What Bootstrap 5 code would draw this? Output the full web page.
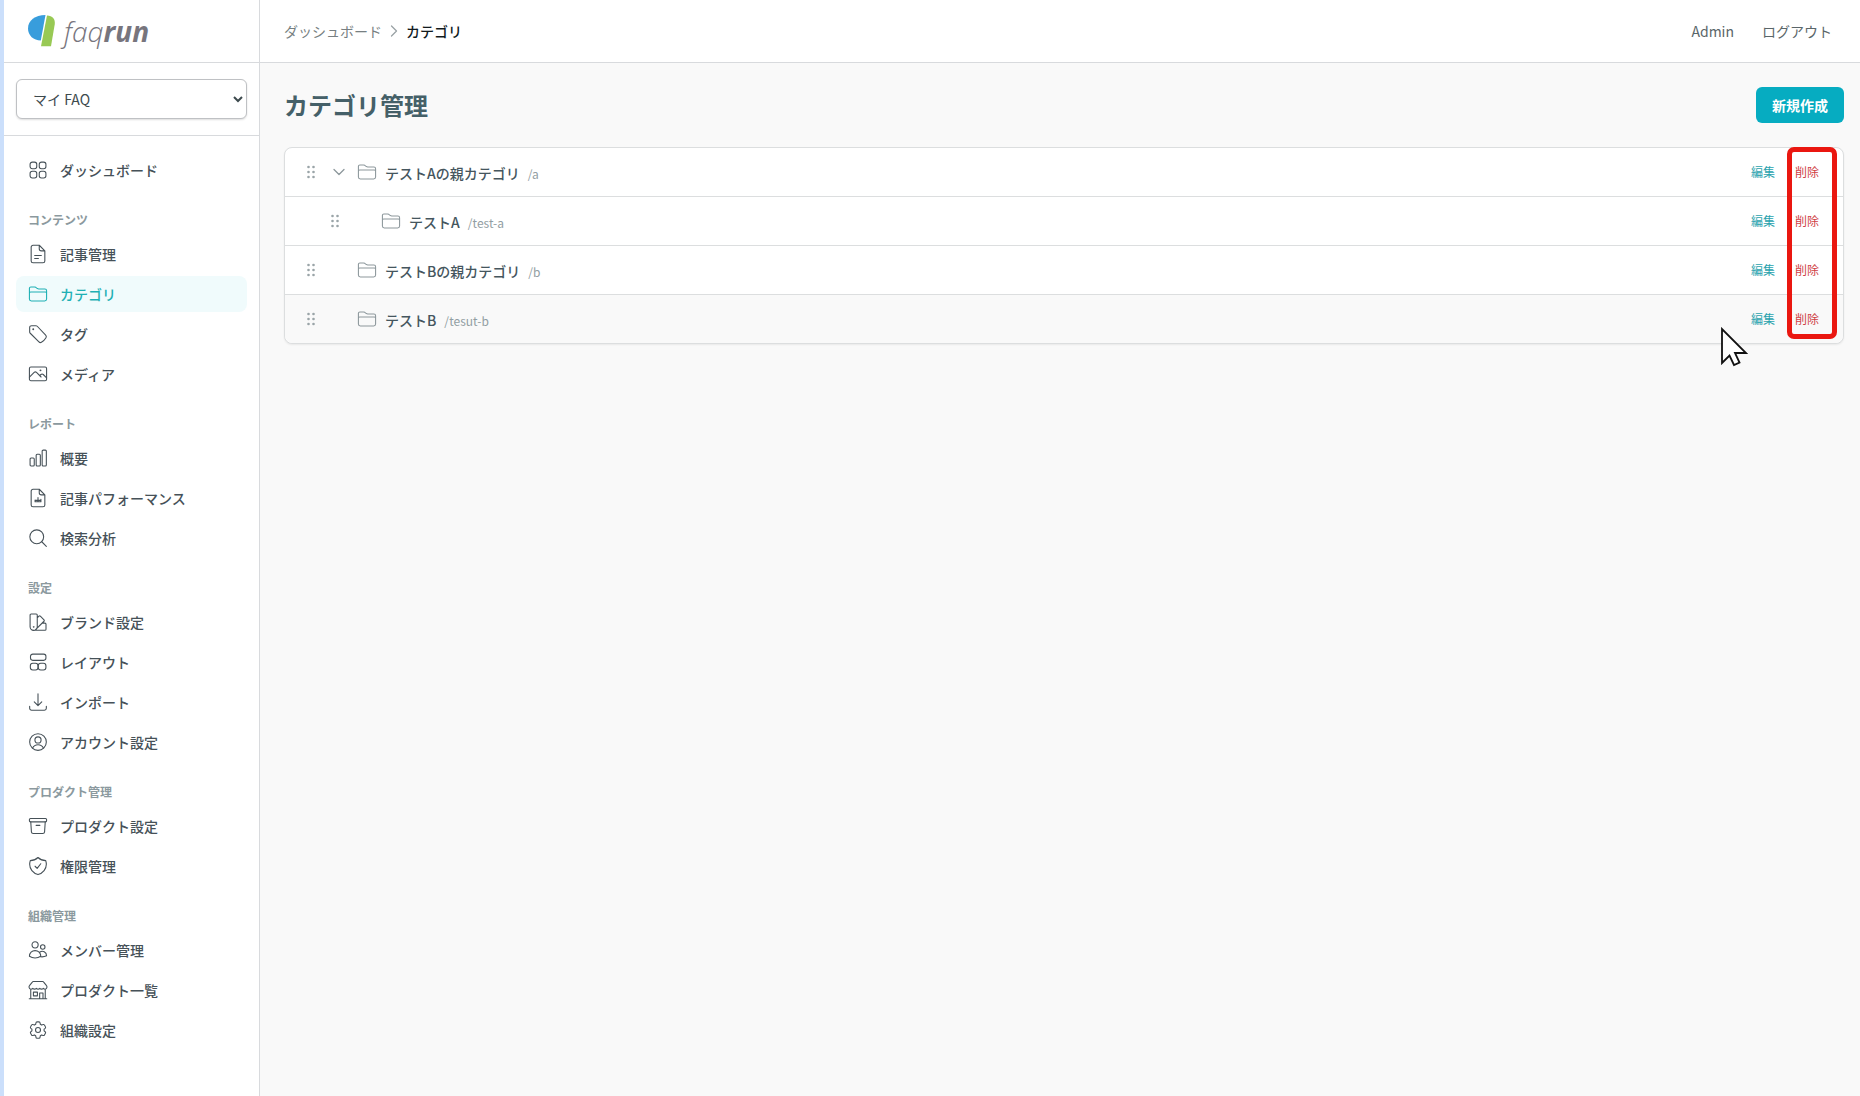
<!DOCTYPE html>
<html lang="ja">
<head>
<meta charset="utf-8">
<meta name="viewport" content="width=device-width, initial-scale=1">
<title>カテゴリ管理 - faqrun</title>
<link href="https://cdn.jsdelivr.net/npm/bootstrap@5.3.0/dist/css/bootstrap.min.css" rel="stylesheet">
<style>
  body { font-family: "Noto Sans CJK JP", sans-serif; font-size: 14px; line-height: 20px; color: #455a60; background: #f9f9f9; }
  a { color: inherit; text-decoration: none; }
  .ico { width: 20px; height: 20px; flex: none; fill: none; stroke: currentColor; stroke-width: 1.3; stroke-linecap: round; stroke-linejoin: round; }
  .shell { border-left: 4px solid #cbdffb; }
  .side { width: 256px; flex: none; background: #fff; border-right: 1px solid #d8dadd; }
  .bar { height: 63px; border-bottom: 1px solid #d8dadd; background: #fff; }
  .brand { font: italic 300 28px/32px "Open Sans", sans-serif; color: #77757d; }
  .brand strong { font-weight: 700; }
  .product { padding: 16px 12px; border-bottom: 1px solid #d8dadd; }
  .product select { width: 100%; height: 40px; padding: 0 0 0 12px; border: 1px solid #bfc1c4; border-radius: 6px; background: #fff; color: #3d4a4e; box-shadow: 0 1px 2px #0002; }
  .menu { padding: 16px 12px; }
  .menu h2 { font-size: 12px; line-height: 16px; font-weight: 700; color: #8b999e; margin: 24px 0 8px; padding: 0 12px; }
  .menu ul { gap: 4px; }
  .menu a { height: 36px; padding: 0 12px; gap: 12px; border-radius: 8px; font-weight: 500; color: #465158; }
  .menu a.active { background: #f0fbfc; color: #1fb0b4; }
  .crumbs { gap: 8px; color: #777f82; }
  .crumbs .ico { width: 8px; height: 14px; color: #9aa2a5; }
  .crumbs b { font-weight: 500; color: #111a1e; }
  .account { gap: 28px; padding-right: 28px; color: #5a6669; }
  .body-pad { padding: 24px 16px 24px 24px; }
  .page-title { font-size: 24px; line-height: 36px; font-weight: 700; color: #456068; }
  .btn-new { height: 36px; padding: 0 16px; border: 0; border-radius: 6px; background: #06acc1; color: #fff; font-size: 14px; font-weight: 700; }
  .tree { background: #fff; border: 1px solid #dcdedf; border-radius: 8px; box-shadow: 0 1px 2px #0001; }
  .tree-row { height: 49px; padding: 0 16px; gap: 8px; border-bottom: 1px solid #dcdedf; }
  .tree-row:last-of-type { height: 48px; border: 0; border-radius: 0 0 8px 8px; background: #f9f9f9; }
  .tree-row .ico { color: #8d989c; }
  .tree-row.child { padding-left: 40px; }
  .spacer { width: 20px; flex: none; }
  .label-pair { padding-top: 2px; }
  .cat { font-weight: 500; color: #45565e; }
  .slug { font-size: 12px; color: #929ea3; }
  .act { font-size: 12px; line-height: 20px; padding: 0 8px; border: 0; background: none; }
  .act-edit { color: #2ba3ae; }
  .act-del { color: #cf4044; }
  .grip { fill: #9aa4a8; stroke: none; }
  .mark-box { position: absolute; top: -1px; bottom: 4px; right: 6px; width: 50px; border: 5px solid #ea1710; border-radius: 7px; pointer-events: none; }
  .pointer { position: absolute; right: 95px; bottom: -24px; width: 28px; height: 40px; pointer-events: none; }
</style>
<script src="https://cdn.jsdelivr.net/npm/bootstrap@5.3.0/dist/js/bootstrap.bundle.min.js"></script>
</head>
<body>
<svg class="d-none" aria-hidden="true">
  <symbol id="i-folder" viewBox="0 0 24 24"><path d="M1.700 18V5.200c0-1 .7-1.700 1.700-1.700h4.400c.6 0 1 .2 1.500.5l2 1.500c.5.300.9.500 1.500.5h7.500c1.100 0 2 .9 2 2v10c0 1.300-1 2.300-2.300 2.300H4c-1.300 0-2.300-1-2.300-2.300zM1.700 11c0-.8.600-1.400 1.400-1.400h17.800c.8 0 1.400.6 1.400 1.400"/></symbol>
  <symbol id="i-grip" viewBox="0 0 20 20"><g class="grip"><circle cx="7.500" cy="5" r="1.300"/><circle cx="12.500" cy="5" r="1.300"/><circle cx="7.500" cy="10" r="1.300"/><circle cx="12.500" cy="10" r="1.300"/><circle cx="7.500" cy="15" r="1.300"/><circle cx="12.500" cy="15" r="1.300"/></g></symbol>
</svg>
<div class="shell d-flex min-vh-100">
  <aside class="side">
    <div class="bar d-flex align-items-center ps-4">
      <a href="#" class="brand d-flex align-items-center gap-2">
        <svg width="28" height="32" viewBox="0 0 28 32" aria-hidden="true"><path d="M17.500 0C7 0 0 5.500 0 13.500c0 7 5.500 12 12.800 12z" fill="#389ddc"/><path d="M19 .5c5.500.3 8.500 3.500 7.700 9L23 31.300h-10z" fill="#98c954"/></svg>
        <span>faq<strong>run</strong></span>
      </a>
    </div>
    <div class="product"><select aria-label="プロダクト"><option>マイ FAQ</option></select></div>
    <nav class="menu" aria-label="メインメニュー">
      <ul class="list-unstyled d-flex flex-column mb-0">
        <li><a href="#" class="d-flex align-items-center"><svg class="ico" viewBox="0 0 24 24"><rect x="2.500" y="2.500" width="8" height="8" rx="2.700"/><rect x="13.500" y="2.500" width="8" height="8" rx="2.700"/><rect x="2.500" y="13.500" width="8" height="8" rx="2.700"/><rect x="13.500" y="13.500" width="8" height="8" rx="2.700"/></svg>ダッシュボード</a></li>
      </ul>
      <h2>コンテンツ</h2>
      <ul class="list-unstyled d-flex flex-column mb-0">
        <li><a href="#" class="d-flex align-items-center"><svg class="ico" viewBox="0 0 24 24"><path d="M13.500 1.500H6A2.200 2.200 0 0 0 3.800 3.700v16.600A2.200 2.200 0 0 0 6 22.500h12a2.200 2.200 0 0 0 2.200-2.200V8.200zM13.500 1.500v4.200c0 1.400 1.100 2.500 2.500 2.500h4.200M8 13.700h8M8 17.500h4.500"/></svg>記事管理</a></li>
        <li><a href="#" class="active d-flex align-items-center" aria-current="page"><svg class="ico"><use href="#i-folder"/></svg>カテゴリ</a></li>
        <li><a href="#" class="d-flex align-items-center"><svg class="ico" viewBox="0 0 24 24"><path d="M9.500 2H4.300A2.300 2.300 0 0 0 2 4.300v5.200c0 .6.200 1.200.7 1.600l10.400 10.400c.8.800 2 1 3 .4a17 17 0 0 0 5.500-5.500c.6-1 .4-2.200-.4-3L11.100 2.700A2.300 2.300 0 0 0 9.500 2z"/><circle cx="6.300" cy="6.300" r=".5"/></svg>タグ</a></li>
        <li><a href="#" class="d-flex align-items-center"><svg class="ico" viewBox="0 0 24 24"><rect x="1.700" y="3.500" width="20.600" height="16.500" rx="1.800"/><path d="m1.700 15.800 5.700-5.700c.8-.8 2-.8 2.800 0l5.500 5.500m-1.600-1.600 1.400-1.400c.8-.8 2-.8 2.800 0l4 4"/><circle cx="15" cy="7.600" r=".5"/></svg>メディア</a></li>
      </ul>
      <h2>レポート</h2>
      <ul class="list-unstyled d-flex flex-column mb-0">
        <li><a href="#" class="d-flex align-items-center"><svg class="ico" viewBox="0 0 24 24"><rect x="2.500" y="12" width="5" height="9.500" rx="1.200"/><rect x="9.800" y="7.500" width="5" height="14" rx="1.200"/><rect x="17" y="2.500" width="5" height="19" rx="1.200"/></svg>概要</a></li>
        <li><a href="#" class="d-flex align-items-center"><svg class="ico" viewBox="0 0 24 24"><path d="M13.500 1.500H6A2.200 2.200 0 0 0 3.800 3.700v16.600A2.200 2.200 0 0 0 6 22.500h12a2.200 2.200 0 0 0 2.200-2.200V8.200zM13.500 1.500v4.200c0 1.400 1.100 2.500 2.500 2.500h4.200M8.500 14.500v2M12 11.500v5M15.500 13.500v3M8.500 14.800h7M8.500 16.500h7"/></svg>記事パフォーマンス</a></li>
        <li><a href="#" class="d-flex align-items-center"><svg class="ico" viewBox="0 0 24 24"><circle cx="10.500" cy="10.500" r="8.300"/><path d="m16.500 16.500 5.500 5.500"/></svg>検索分析</a></li>
      </ul>
      <h2>設定</h2>
      <ul class="list-unstyled d-flex flex-column mb-0">
        <li><a href="#" class="d-flex align-items-center"><svg class="ico" viewBox="0 0 24 24"><path d="M2.500 3.700c0-.8.500-1.300 1.300-1.300h6c.8 0 1.300.5 1.300 1.300v14a4.300 4.300 0 0 1-8.600 0zM6.800 21.900h13.500c.8 0 1.300-.5 1.300-1.300v-6c0-.8-.5-1.300-1.300-1.300h-3M11.100 7l2-2c.5-.5 1.200-.5 1.700 0l4.400 4.400c.5.500.5 1.200 0 1.700L8.800 21.500"/><circle cx="6.800" cy="17.700" r=".4"/></svg>ブランド設定</a></li>
        <li><a href="#" class="d-flex align-items-center"><svg class="ico" viewBox="0 0 24 24"><rect x="3" y="2.500" width="18.500" height="7.500" rx="2.700"/><rect x="2.800" y="13.500" width="9.200" height="8" rx="3"/><rect x="12.300" y="13.500" width="9.200" height="8" rx="3"/></svg>レイアウト</a></li>
        <li><a href="#" class="d-flex align-items-center"><svg class="ico" viewBox="0 0 24 24"><path d="M2 17v2.500A2.300 2.300 0 0 0 4.300 21.800h15.400a2.300 2.300 0 0 0 2.300-2.300V17M12 2v14M7.500 11.800 12 16.300l4.500-4.500"/></svg>インポート</a></li>
        <li><a href="#" class="d-flex align-items-center"><svg class="ico" viewBox="0 0 24 24"><circle cx="12" cy="12" r="10"/><circle cx="12" cy="9.500" r="3.700"/><path d="M5.500 19.300c1.200-2.600 3.600-4.100 6.500-4.100s5.300 1.500 6.500 4.100"/></svg>アカウント設定</a></li>
      </ul>
      <h2>プロダクト管理</h2>
      <ul class="list-unstyled d-flex flex-column mb-0">
        <li><a href="#" class="d-flex align-items-center"><svg class="ico" viewBox="0 0 24 24"><rect x="1.700" y="3" width="20.600" height="4" rx="1.200"/><path d="m3.300 7 .8 12a2.200 2.200 0 0 0 2.200 2h11.400a2.200 2.200 0 0 0 2.200-2l.8-12M9.700 11.200h4.600"/></svg>プロダクト設定</a></li>
        <li><a href="#" class="d-flex align-items-center"><svg class="ico" viewBox="0 0 24 24"><path d="M12 1.800c-2.500 2.400-5.700 3.700-9.300 3.700-.4 1.500-.7 3-.7 4.500 0 5.600 3.800 10.700 10 12.300 6.200-1.600 10-6.700 10-12.300 0-1.500-.3-3-.7-4.500-3.600 0-6.800-1.300-9.300-3.700zM8.500 12.300l2.500 2.500 4.300-5.500"/></svg>権限管理</a></li>
      </ul>
      <h2>組織管理</h2>
      <ul class="list-unstyled d-flex flex-column mb-0">
        <li><a href="#" class="d-flex align-items-center"><svg class="ico" viewBox="0 0 24 24"><circle cx="8.500" cy="5.800" r="3.700"/><circle cx="17.700" cy="8.300" r="2.700"/><path d="M1.700 19.500c0-4 3-6.800 6.800-6.800s6.800 2.800 6.800 6.800c-2 1.300-4.300 2-6.800 2s-4.800-.7-6.800-2zM14 14.700c3.500-2.800 8.300-.5 8.300 4.300-2 1-4.500 1.500-7 1.200"/></svg>メンバー管理</a></li>
        <li><a href="#" class="d-flex align-items-center"><svg class="ico" viewBox="0 0 24 24"><path d="M3.300 11v11.500M20.700 11v11.500M1.500 22.500h21M14 22.500v-7h4v7M6.500 14.500h4.800v4.500H6.500zM3.300 11A2.700 2.700 0 0 1 2 6.500l3.200-4c.3-.5.7-.7 1.200-.7h11.200c.5 0 .9.2 1.200.7l3.200 4a2.700 2.700 0 0 1-1.300 4.500c-1 0-1.800-.4-2.300-1-1.200 1.300-3.200 1.300-4.200 0-1 1.300-3.200 1.300-4.200 0-1.200 1.300-3.200 1.300-4.200 0-.5.600-1.500 1-2.500 1z"/></svg>プロダクト一覧</a></li>
        <li><a href="#" class="d-flex align-items-center"><svg class="ico" viewBox="0 0 24 24"><path d="M9.500 3.500c.1-.8.600-1.300 1.300-1.300h2.400c.7 0 1.200.5 1.300 1.300l.3 1.700 1.500.9 1.700-.6c.7-.3 1.400 0 1.700.6l1.200 2.100c.4.600.2 1.300-.3 1.800L19.300 11v2l1.300 1.100c.5.400.7 1.100.3 1.700l-1.200 2.100c-.3.600-1 .9-1.700.6l-1.700-.6-1.500.9-.3 1.700c-.1.800-.6 1.300-1.300 1.300h-2.400c-.7 0-1.200-.5-1.300-1.300l-.3-1.700-1.500-.9-1.700.6c-.7.300-1.400 0-1.700-.6l-1.200-2.100c-.4-.6-.2-1.300.3-1.700L4.700 13v-2L3.400 10c-.5-.5-.7-1.200-.3-1.800l1.200-2.100c.3-.6 1-.9 1.700-.6l1.700.6 1.500-.9z"/><circle cx="12" cy="12" r="3"/></svg>組織設定</a></li>
      </ul>
    </nav>
  </aside>
  <div class="flex-grow-1">
    <header class="bar d-flex align-items-center justify-content-between ps-4">
      <nav class="crumbs d-flex align-items-center" aria-label="パンくず">
        <a href="#">ダッシュボード</a>
        <svg class="ico" viewBox="1 0 8 14"><path d="m2.500 2 5 5-5 5"/></svg>
        <b>カテゴリ</b>
      </nav>
      <div class="account d-flex"><a href="#">Admin</a><a href="#">ログアウト</a></div>
    </header>
    <main class="body-pad">
      <div class="d-flex align-items-center justify-content-between mb-4">
        <h1 class="page-title mb-0">カテゴリ管理</h1>
        <button type="button" class="btn-new">新規作成</button>
      </div>
      <div class="tree position-relative">
        <div class="tree-row d-flex align-items-center">
          <svg class="ico"><use href="#i-grip"/></svg>
          <svg class="ico" viewBox="0 0 20 20"><path d="m5 7.500 5 5 5-5"/></svg>
          <svg class="ico"><use href="#i-folder"/></svg>
          <div class="label-pair d-flex align-items-baseline gap-2 flex-grow-1"><span class="cat">テストAの親カテゴリ</span><span class="slug">/a</span></div>
          <div class="d-flex gap-1"><button type="button" class="act act-edit">編集</button><button type="button" class="act act-del">削除</button></div>
        </div>
        <div class="tree-row child d-flex align-items-center">
          <svg class="ico"><use href="#i-grip"/></svg>
          <span class="spacer"></span>
          <svg class="ico"><use href="#i-folder"/></svg>
          <div class="label-pair d-flex align-items-baseline gap-2 flex-grow-1"><span class="cat">テストA</span><span class="slug">/test-a</span></div>
          <div class="d-flex gap-1"><button type="button" class="act act-edit">編集</button><button type="button" class="act act-del">削除</button></div>
        </div>
        <div class="tree-row d-flex align-items-center">
          <svg class="ico"><use href="#i-grip"/></svg>
          <span class="spacer"></span>
          <svg class="ico"><use href="#i-folder"/></svg>
          <div class="label-pair d-flex align-items-baseline gap-2 flex-grow-1"><span class="cat">テストBの親カテゴリ</span><span class="slug">/b</span></div>
          <div class="d-flex gap-1"><button type="button" class="act act-edit">編集</button><button type="button" class="act act-del">削除</button></div>
        </div>
        <div class="tree-row d-flex align-items-center">
          <svg class="ico"><use href="#i-grip"/></svg>
          <span class="spacer"></span>
          <svg class="ico"><use href="#i-folder"/></svg>
          <div class="label-pair d-flex align-items-baseline gap-2 flex-grow-1"><span class="cat">テストB</span><span class="slug">/tesut-b</span></div>
          <div class="d-flex gap-1"><button type="button" class="act act-edit">編集</button><button type="button" class="act act-del">削除</button></div>
        </div>
        <span class="mark-box"></span>
        <svg class="pointer" viewBox="0 0 28 40" aria-hidden="true"><path d="M2 2v34l7.500-7.500 4.500 9.500 5.500-2.500-4.500-9.500H26z" fill="#fff" stroke="#111" stroke-width="1.800"/></svg>
      </div>
    </main>
  </div>
</div>
</body>
</html>
